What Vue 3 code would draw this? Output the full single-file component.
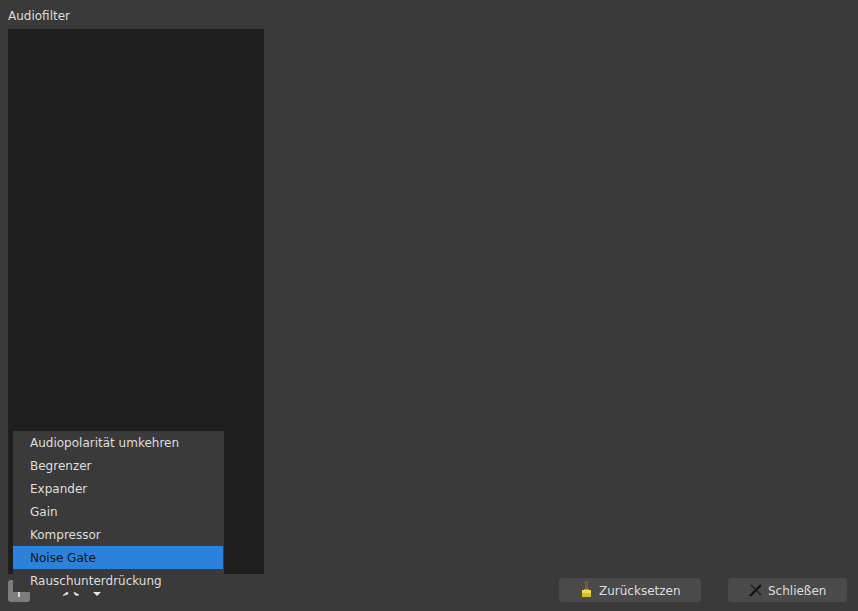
<script setup>
const filters = [
  'Audiopolarität umkehren',
  'Begrenzer',
  'Expander',
  'Gain',
  'Kompressor',
  'Noise Gate',
  'Rauschunterdrückung',
]
</script>

<template>
  <div class="window">
    <div class="title">Audiofilter</div>
    <div class="list"></div>
    <div class="bottom">
      <div class="tools">
        <button class="tool add">
          <svg width="16" height="16" viewBox="0 0 16 16"><path d="M8 2v12M2 8h12" stroke="#d8d8d8" stroke-width="2" /></svg>
        </button>
        <button class="tool">
          <svg width="16" height="16" viewBox="0 0 16 16"><path d="M3 8h10" stroke="#e6e6e6" stroke-width="2" /></svg>
        </button>
        <button class="tool gear">
          <svg width="18" height="18" viewBox="0 0 18 18">
            <path d="M1 13.5L5.5 9.5L6 12L3 13z" fill="#e6e6e6" stroke="#e6e6e6" stroke-width="0.6" />
            <path d="M12 10L17 13L14 13.5L12.5 12z" fill="#e6e6e6" stroke="#e6e6e6" stroke-width="0.6" />
          </svg>
        </button>
        <button class="tool caret">
          <svg width="10" height="6" viewBox="0 0 10 6"><path d="M0 0h10L5 5z" fill="#e6e6e6" /></svg>
        </button>
      </div>
      <div class="actions">
        <button class="btn reset">
          <svg width="12" height="18" viewBox="0 0 12 18">
            <rect x="5" y="0" width="3" height="8" fill="#7a5a35" />
            <rect x="4" y="8" width="5" height="1" fill="#9a9a90" />
            <rect x="2" y="9" width="9" height="3" fill="#efdc4a" />
            <rect x="2" y="12" width="9" height="4" fill="#d9c02a" />
          </svg>
          <span>Zurücksetzen</span>
        </button>
        <button class="btn close">
          <svg width="14" height="14" viewBox="0 0 14 14">
            <path d="M1 13L12 2" stroke="#111" stroke-width="2.2" />
            <path d="M2 2l10 10" stroke="#222" stroke-width="1.6" />
          </svg>
          <span>Schließen</span>
        </button>
      </div>
    </div>
    <ul class="menu">
      <li v-for="f in filters" :key="f" :class="{ active: f === 'Noise Gate' }">{{ f }}</li>
    </ul>
  </div>
</template>

<style scoped>
.window {
  position: relative;
  box-sizing: border-box;
  width: 858px;
  height: 611px;
  padding: 8px 11px 9px 8px;
  display: flex;
  flex-direction: column;
  background: #3a3a3a;
  color: #dedede;
  font: 12px "DejaVu Sans", sans-serif;
}
.title {
  height: 21px;
  line-height: 16px;
}
.list {
  width: 256px;
  height: 545px;
  background: #1e1e1e;
}
.bottom {
  display: flex;
  justify-content: space-between;
  margin-top: 4px;
}
.tools {
  display: flex;
  align-items: center;
  margin-top: 2px;
}
.tool {
  width: 22px;
  height: 22px;
  padding: 0;
  margin-right: 5px;
  border: 0;
  background: transparent;
  display: flex;
  align-items: center;
  justify-content: center;
}
.add {
  background: #7d7d7d;
  border-radius: 3px;
}
.gear {
  width: 18px;
  margin-right: 6px;
}
.caret {
  padding-top: 6px;
}
.actions {
  display: flex;
  gap: 27px;
}
.btn {
  box-sizing: border-box;
  height: 24px;
  padding: 0 0 0 21px;
  border: 0;
  border-radius: 3px;
  background: #4a4a4a;
  color: #dedede;
  font: inherit;
  display: flex;
  align-items: center;
  gap: 7px;
}
.btn span {
  line-height: 14px;
  margin-top: 2px;
}
.reset {
  width: 142px;
}
.close {
  width: 119px;
  gap: 5px;
}
.menu {
  position: absolute;
  left: 13px;
  top: 431px;
  width: 211px;
  margin: 0;
  padding: 0;
  list-style: none;
  background: #3a3a3a;
}
.menu li {
  box-sizing: border-box;
  width: 210px;
  height: 23px;
  line-height: 24px;
  padding-left: 17px;
}
.menu li.active {
  background: #2a82da;
  color: #0a1420;
}
</style>
